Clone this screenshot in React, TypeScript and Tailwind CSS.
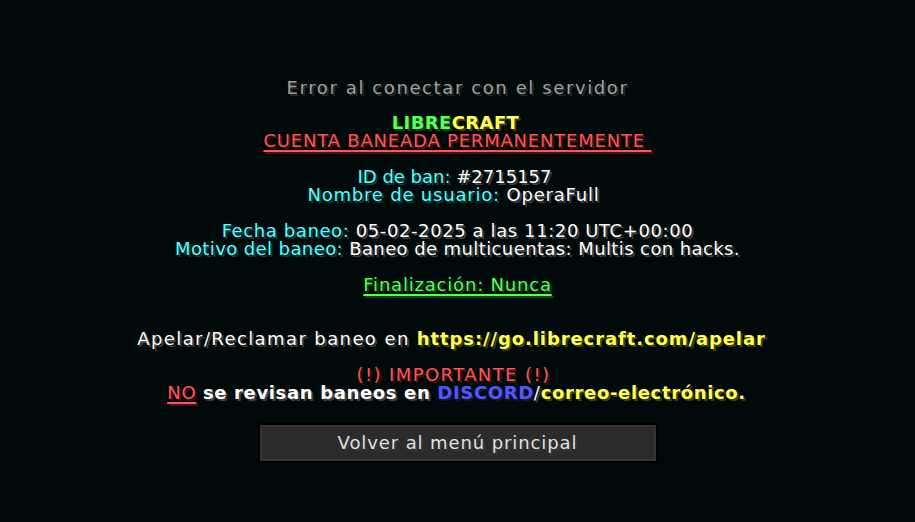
import React from "react";

const sh = (c: string) => ({ textShadow: `2px 2px 0 ${c}` });

function S({ c, s, b, u, t, children }: { c: string; s: string; b?: boolean; u?: boolean; t?: string; children: React.ReactNode }) {
  return (
    <span
      className={`${b ? "font-bold" : ""} ${t ?? (b ? "tracking-[0.9px]" : "")} ${u ? "underline decoration-2 underline-offset-[3px]" : ""}`}
      style={{ color: c, ...sh(s) }}
    >
      {children}
    </span>
  );
}

const AQ = ["#55ffff", "#153f3f"] as const;
const WH = ["#ffffff", "#3f3f3f"] as const;

export default function App() {
  return (
    <div
      className="w-[915px] h-[522px] bg-[#010a0b] flex flex-col items-center text-[18px] leading-[18px] tracking-[0.8px] whitespace-pre"
      style={{ fontFamily: '"DejaVu Sans", sans-serif' }}
    >
      <div className="mt-[79px] h-[18px] tracking-[1.6px]" style={{ color: "#a0a0a0", ...sh("#282828") }}>
        Error al conectar con el servidor
      </div>
      <div className="mt-[17px] flex flex-col items-center">
        <div className="h-[18px] mr-[4px]">
          <S c="#55ff55" s="#153f15" b t="tracking-[0.4px]">LIBRE</S>
          <S c="#ffff55" s="#3f3f15" b t="tracking-[0.4px]">CRAFT</S>
        </div>
        <div className="h-[18px]">
          <S c="#ff5555" s="#3f1515" u>CUENTA BANEADA PERMANENTEMENTE </S>
        </div>
        <div className="h-[18px]" />
        <div className="h-[18px] tracking-[0px] mr-[6px]">
          <S c={AQ[0]} s={AQ[1]}>ID de ban: </S>
          <S c={WH[0]} s={WH[1]}>#2715157</S>
        </div>
        <div className="h-[18px] mr-[8px]">
          <S c={AQ[0]} s={AQ[1]}>Nombre de usuario: </S>
          <S c={WH[0]} s={WH[1]}>OperaFull</S>
        </div>
        <div className="h-[18px]" />
        <div className="h-[18px] tracking-[0.6px]">
          <S c={AQ[0]} s={AQ[1]}>Fecha baneo: </S>
          <S c={WH[0]} s={WH[1]}>05-02-2025 a las 11:20 UTC+00:00</S>
        </div>
        <div className="h-[18px] tracking-[0.4px]">
          <S c={AQ[0]} s={AQ[1]}>Motivo del baneo: </S>
          <S c={WH[0]} s={WH[1]}>Baneo de multicuentas: Multis con hacks.</S>
        </div>
        <div className="h-[18px]" />
        <div className="h-[18px]">
          <S c="#55ff55" s="#153f15" u>Finalización: Nunca</S>
        </div>
        <div className="h-[18px]" />
        <div className="h-[18px]" />
        <div className="h-[18px] tracking-[1.4px] mr-[12px]">
          <S c={WH[0]} s={WH[1]}>Apelar/Reclamar baneo en </S>
          <S c="#ffff55" s="#3f3f15" b>https://go.librecraft.com/apelar</S>
        </div>
        <div className="h-[18px]" />
        <div className="h-[18px] tracking-[1.4px] mr-[8px]">
          <S c="#ff5555" s="#3f1515">(!) IMPORTANTE (!)</S>
        </div>
        <div className="h-[18px] mr-[2px]">
          <S c="#ff5555" s="#3f1515" u>NO</S>
          <S c={WH[0]} s={WH[1]}> </S>
          <S c={WH[0]} s={WH[1]} b t="tracking-[0.65px]">se revisan baneos en </S>
          <S c="#5555ff" s="#15153f" b t="tracking-[0.65px]">DISCORD</S>
          <S c={WH[0]} s={WH[1]}>/</S>
          <S c="#ffff55" s="#3f3f15" b t="tracking-[0.65px]">correo-electrónico.</S>
        </div>
      </div>
      <button className="mt-[21px] w-[400px] h-[40px] border-2 border-black bg-[#2b2b2b] flex items-center justify-center">
        <div className="w-full h-full border-2 border-[#343434] flex items-center justify-center tracking-[0.9px]">
          <span style={{ color: "#e0e0e0", ...sh("#383838") }}>Volver al menú principal</span>
        </div>
      </button>
    </div>
  );
}
